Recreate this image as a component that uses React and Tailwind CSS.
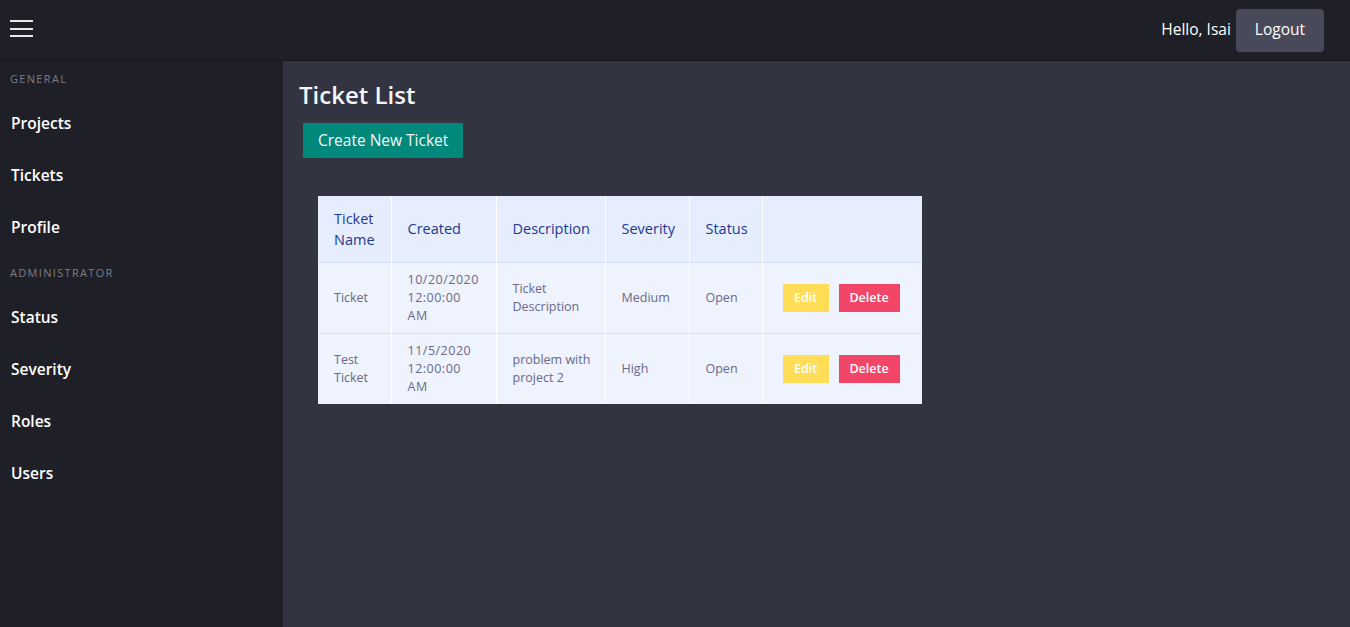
import React from "react";

const tickets = [
    { name: "Ticket", created: "10/20/2020 12:00:00 AM", description: "Ticket Description", severity: "Medium", status: "Open" },
    { name: "Test Ticket", created: "11/5/2020 12:00:00 AM", description: "problem with project 2", severity: "High", status: "Open" },
];

const general = ["Projects", "Tickets", "Profile"];
const admin = ["Status", "Severity", "Roles", "Users"];

const App = () => {
    return (
        <div className="h-[627px] w-[1350px] flex flex-col overflow-hidden text-white" style={{ fontFamily: '"Open Sans", "Noto Sans", sans-serif' }}>
            {/* Top bar */}
            <header className="h-[61px] shrink-0 flex items-center justify-between bg-[#1f1f27] border-b border-[#18181e] pl-[10px] pr-[26px]">
                <svg width="24" height="20" viewBox="0 0 24 20" className="-mt-[4px]">
                    <rect x="0" y="2" width="23" height="2" fill="#e8e8e8" />
                    <rect x="0" y="10" width="23" height="2" fill="#e8e8e8" />
                    <rect x="0" y="17" width="23" height="2" fill="#e8e8e8" />
                </svg>
                <div className="flex items-center gap-[5px]">
                    <span className="text-[15.5px]">Hello, Isai</span>
                    <button className="h-[43px] px-[19px] rounded-[4px] bg-[#484a59] text-[15.5px] font-medium">Logout</button>
                </div>
            </header>

            <div className="flex flex-1 min-h-0">
                {/* Sidebar */}
                <aside className="w-[283px] shrink-0 bg-[#1f1f27] pt-[10px]">
                    <p className="px-[10px] text-[11px] tracking-[0.12em] text-[#7d7d84] leading-[16px]">GENERAL</p>
                    <ul className="mt-[11px]">
                        {general.map((item) => (
                            <li key={item} className="h-[52px] flex items-center px-[11px] text-[15.5px] font-semibold">{item}</li>
                        ))}
                    </ul>
                    <p className="px-[10px] text-[11px] tracking-[0.12em] text-[#7d7d84] leading-[16px] mt-[11px]">ADMINISTRATOR</p>
                    <ul className="mt-[11px]">
                        {admin.map((item) => (
                            <li key={item} className="h-[52px] flex items-center px-[11px] text-[15.5px] font-semibold">{item}</li>
                        ))}
                    </ul>
                </aside>

                {/* Main */}
                <main className="flex-1 bg-[#333442] pl-[16px] pt-[17px]">
                    <h1 className="text-[24px] font-semibold leading-[33px] text-[#f5f5f5]">Ticket List</h1>
                    <button className="mt-[12px] ml-[4px] h-[35px] px-[15px] bg-[#00897b] text-[15.5px] text-[#f5f5f5]">Create New Ticket</button>

                    <table className="mt-[38px] ml-[19px] w-[604px] table-fixed border-collapse text-left">
                        <colgroup>
                            <col className="w-[73px]" />
                            <col className="w-[105px]" />
                            <col className="w-[109px]" />
                            <col className="w-[84px]" />
                            <col className="w-[73px]" />
                            <col className="w-[160px]" />
                        </colgroup>
                        <thead>
                            <tr className="bg-[#e6edfd] text-[#1d3a8f] text-[14.5px] leading-[21px]">
                                {["Ticket Name", "Created", "Description", "Severity", "Status", ""].map((h, i) => (
                                    <th key={i} className="font-normal align-middle h-[66px] pl-[16px] pr-[8px] border-r border-white last:border-r-0">{h}</th>
                                ))}
                            </tr>
                        </thead>
                        <tbody>
                            {tickets.map((t) => (
                                <tr key={t.name} className="bg-[#eef3fe] text-[#6b6888] text-[12.5px] leading-[18px] border-t border-[#d6e0fb]">
                                    <td className="h-[71px] pl-[16px] pr-[8px] border-r border-white">{t.name}</td>
                                    <td className="pl-[16px] pr-[16px] border-r border-white tracking-[0.04em]">{t.created}</td>
                                    <td className="pl-[16px] pr-[8px] border-r border-white">{t.description}</td>
                                    <td className="pl-[16px] pr-[8px] border-r border-white">{t.severity}</td>
                                    <td className="pl-[16px] pr-[8px] border-r border-white">{t.status}</td>
                                    <td className="pl-[20px]">
                                        <div className="flex gap-[10px]">
                                            <button className="h-[28px] w-[46px] bg-[#ffdd57] text-white text-[12.5px] font-semibold">Edit</button>
                                            <button className="h-[28px] w-[61px] bg-[#f14668] text-white text-[12.5px] font-semibold">Delete</button>
                                        </div>
                                    </td>
                                </tr>
                            ))}
                        </tbody>
                    </table>
                </main>
            </div>
        </div>
    );
};

export default App;
